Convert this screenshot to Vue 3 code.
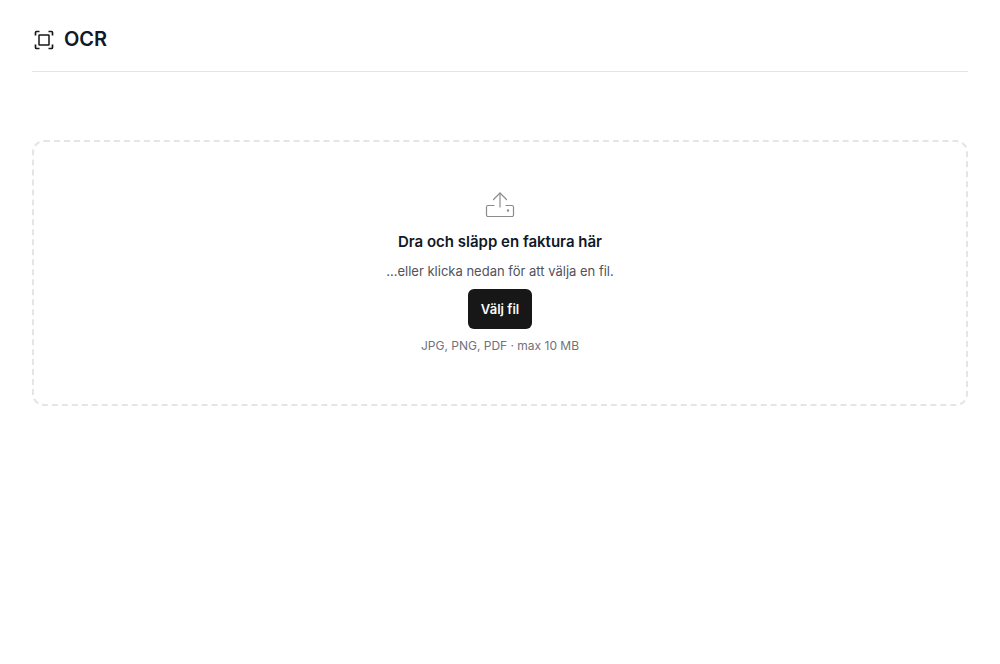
<template>
  <div class="page">
    <header class="header">
      <svg class="scan-icon" width="24" height="24" viewBox="0 0 24 24" fill="none" stroke="currentColor" stroke-width="1.7">
        <path d="M3.5 7.5V4.5a1 1 0 0 1 1-1h3" />
        <path d="M16.5 3.5h3a1 1 0 0 1 1 1v3" />
        <path d="M20.5 16.5v3a1 1 0 0 1-1 1h-3" />
        <path d="M7.5 20.5h-3a1 1 0 0 1-1-1v-3" />
        <rect x="7" y="7" width="10" height="10" rx="0.5" stroke-width="1.5" />
      </svg>
      <h1>OCR</h1>
    </header>

    <section class="dropzone">
      <svg class="upload-icon" width="32" height="32" viewBox="0 0 32 32" fill="none" stroke="currentColor" stroke-width="1.2" stroke-linecap="round" stroke-linejoin="round">
        <path d="M10 15.5H4A1.5 1.5 0 0 0 2.5 17v8A1.5 1.5 0 0 0 4 26.5h24a1.5 1.5 0 0 0 1.5-1.5v-8a1.5 1.5 0 0 0-1.5-1.5h-6" />
        <path d="M16 17V3" />
        <path d="M9.5 9.5 16 3l6.5 6.5" />
        <circle cx="24" cy="20.5" r="0.6" fill="currentColor" />
      </svg>
      <h2>Dra och släpp en faktura här</h2>
      <p class="hint">...eller klicka nedan för att välja en fil.</p>
      <button class="pick" type="button">Välj fil</button>
      <p class="formats">JPG, PNG, PDF · max 10 MB</p>
    </section>
  </div>
</template>

<script setup>
</script>

<style scoped>
.page {
  padding: 0 32px;
  font-family: Inter, "Liberation Sans", sans-serif;
  color: #111827;
}

.header {
  display: flex;
  align-items: center;
  gap: 8px;
  height: 63px;
  padding-top: 8px;
  border-bottom: 1px solid #e5e5e5;
  margin-bottom: 68px;
}

.scan-icon {
  color: #18181b;
}

.header h1 {
  margin: 0 0 2px;
  font-size: 20px;
  font-weight: 600;
  line-height: 28px;
}

.dropzone {
  display: flex;
  flex-direction: column;
  align-items: center;
  height: 266px;
  box-sizing: border-box;
  padding-top: 48px;
  border: 2px dashed #e5e5e5;
  border-radius: 12px;
}

.upload-icon {
  color: #8c8c8c;
  margin-bottom: 10px;
}

.dropzone h2 {
  margin: 0;
  font-size: 15px;
  font-weight: 600;
  line-height: 20px;
}

.hint {
  margin: 9px 0 0;
  font-size: 13px;
  line-height: 20px;
  color: #52525b;
}

.pick {
  margin-top: 8px;
  width: 64px;
  height: 40px;
  border: none;
  border-radius: 6px;
  background: #171717;
  color: #fafafa;
  font-family: inherit;
  font-size: 13px;
  font-weight: 600;
}

.formats {
  margin: 8px 0 0;
  font-size: 12px;
  line-height: 18px;
  color: #71717a;
}
</style>
